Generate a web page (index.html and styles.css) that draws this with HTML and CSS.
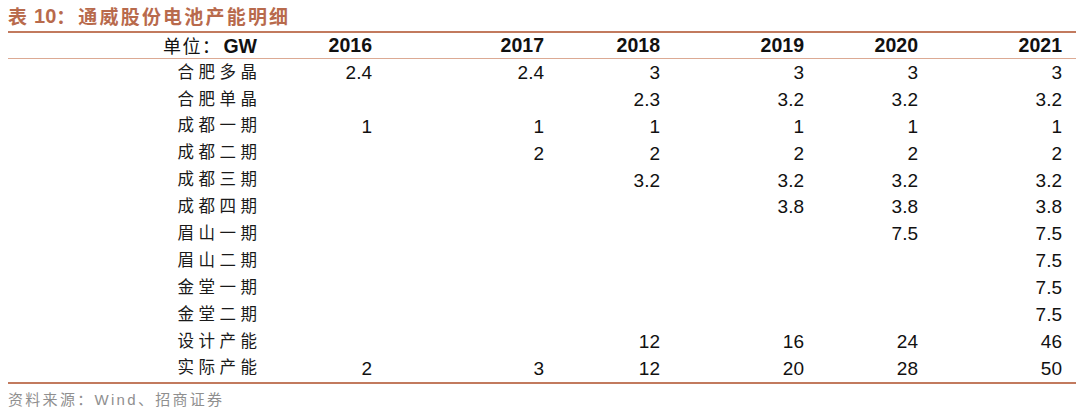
FILE: index.html
```html
<!DOCTYPE html>
<html lang="zh-CN">
<head>
<meta charset="utf-8">
<title>通威股份电池产能明细</title>
<link rel="stylesheet" href="styles.css">
</head>
<body>
<div class="page">
  <div class="title"><span class="t-lead">表</span><span class="t-num">10</span><span class="t-colon">：</span><span class="t-text">通威股份电池产能明细</span></div>
  <div class="table">
    <div class="row head">
      <div class="cell label"><span class="cjk">单位：</span>GW</div>
      <div class="cell">2016</div><div class="cell">2017</div><div class="cell">2018</div><div class="cell">2019</div><div class="cell">2020</div><div class="cell last">2021</div>
    </div>
    <div class="body">
      <div class="row"><div class="cell label cjk-l">合肥多晶</div><div class="cell">2.4</div><div class="cell">2.4</div><div class="cell">3</div><div class="cell">3</div><div class="cell">3</div><div class="cell last">3</div></div>
      <div class="row"><div class="cell label cjk-l">合肥单晶</div><div class="cell"></div><div class="cell"></div><div class="cell">2.3</div><div class="cell">3.2</div><div class="cell">3.2</div><div class="cell last">3.2</div></div>
      <div class="row"><div class="cell label cjk-l">成都一期</div><div class="cell">1</div><div class="cell">1</div><div class="cell">1</div><div class="cell">1</div><div class="cell">1</div><div class="cell last">1</div></div>
      <div class="row"><div class="cell label cjk-l">成都二期</div><div class="cell"></div><div class="cell">2</div><div class="cell">2</div><div class="cell">2</div><div class="cell">2</div><div class="cell last">2</div></div>
      <div class="row"><div class="cell label cjk-l">成都三期</div><div class="cell"></div><div class="cell"></div><div class="cell">3.2</div><div class="cell">3.2</div><div class="cell">3.2</div><div class="cell last">3.2</div></div>
      <div class="row"><div class="cell label cjk-l">成都四期</div><div class="cell"></div><div class="cell"></div><div class="cell"></div><div class="cell">3.8</div><div class="cell">3.8</div><div class="cell last">3.8</div></div>
      <div class="row"><div class="cell label cjk-l">眉山一期</div><div class="cell"></div><div class="cell"></div><div class="cell"></div><div class="cell"></div><div class="cell">7.5</div><div class="cell last">7.5</div></div>
      <div class="row"><div class="cell label cjk-l">眉山二期</div><div class="cell"></div><div class="cell"></div><div class="cell"></div><div class="cell"></div><div class="cell"></div><div class="cell last">7.5</div></div>
      <div class="row"><div class="cell label cjk-l">金堂一期</div><div class="cell"></div><div class="cell"></div><div class="cell"></div><div class="cell"></div><div class="cell"></div><div class="cell last">7.5</div></div>
      <div class="row"><div class="cell label cjk-l">金堂二期</div><div class="cell"></div><div class="cell"></div><div class="cell"></div><div class="cell"></div><div class="cell"></div><div class="cell last">7.5</div></div>
      <div class="row"><div class="cell label cjk-l">设计产能</div><div class="cell"></div><div class="cell"></div><div class="cell">12</div><div class="cell">16</div><div class="cell">24</div><div class="cell last">46</div></div>
      <div class="row"><div class="cell label cjk-l">实际产能</div><div class="cell">2</div><div class="cell">3</div><div class="cell">12</div><div class="cell">20</div><div class="cell">28</div><div class="cell last">50</div></div>
    </div>
  </div>
  <div class="source">资料来源：<span class="src-latin">Wind</span>、招商证券</div>
</div>
</body>
</html>
```

FILE: styles.css
```css
html, body {
  margin: 0;
  padding: 0;
  background: #ffffff;
}

.page {
  width: 1080px;
  height: 412px;
  padding: 0 4px 0 8px;
  box-sizing: border-box;
  font-family: "Liberation Sans", Arial, "Noto Sans CJK SC", sans-serif;
  color: #111111;
}

.title {
  height: 31px;
  display: flex;
  align-items: center;
  color: #b86a4c;
  font-weight: 700;
  font-size: 19px;
  font-family: "Noto Sans CJK SC", sans-serif;
  box-sizing: border-box;
  line-height: 1;
}

.t-num {
  font-family: "Liberation Sans", Arial, sans-serif;
  font-size: 20px;
  margin-left: 7px;
}

.t-colon {
  margin-right: 3px;
}

.t-text {
  letter-spacing: 2.2px;
}

.table {
  border-top: 2px solid #c27a5e;
  border-bottom: 2px solid #c27a5e;
}

.row {
  display: grid;
  grid-template-columns: 254px 115px 172px 116px 144px 114px 153px;
  height: 26.9px;
  align-items: center;
}

.row.head {
  height: 25px;
  border-bottom: 1px solid #dcaa94;
  font-weight: 700;
}

.cell {
  text-align: right;
  padding-right: 5px;
  font-size: 19px;
  line-height: 1;
  white-space: nowrap;
}

.head .cell {
  font-size: 19.5px;
  padding-top: 1px;
}

.cell.last {
  padding-right: 14px;
}

.cjk {
  font-family: "Noto Sans CJK SC", sans-serif;
  font-weight: 400;
  font-size: 18px;
  letter-spacing: 1.5px;
  margin-right: 2px;
}

.cell.cjk-l {
  font-family: "Noto Sans CJK SC", sans-serif;
  font-weight: 400;
  font-size: 16.5px;
  letter-spacing: 4.5px;
  padding-right: 0.5px;
  color: #1a1a1a;
  padding-bottom: 3px;
}

.source {
  margin-top: 5px;
  font-family: "Noto Sans CJK SC", sans-serif;
  font-size: 15px;
  letter-spacing: 2.3px;
  color: #8f8f8f;
  line-height: 20px;
}

.src-latin {
  font-family: "Liberation Sans", Arial, sans-serif;
}
```
